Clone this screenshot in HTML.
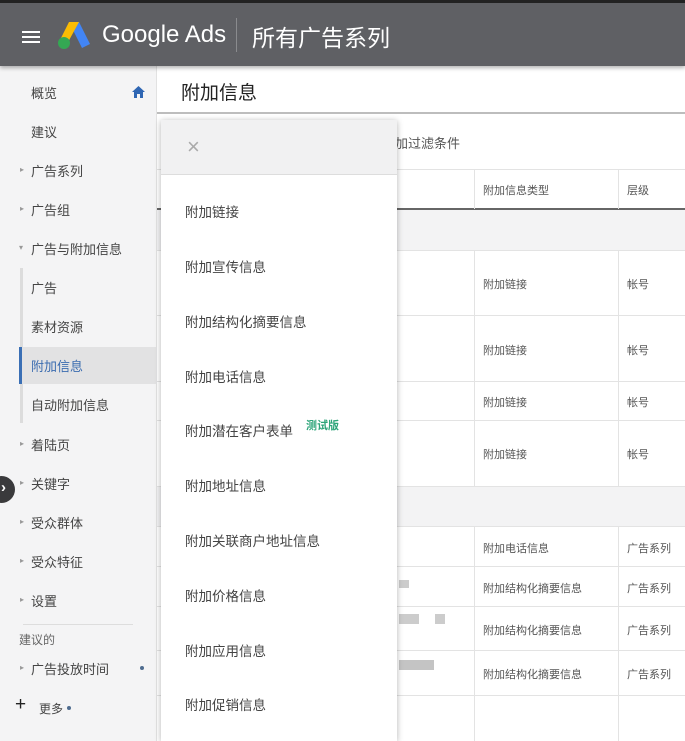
<!DOCTYPE html>
<html><head><meta charset="utf-8"><style>
*{margin:0;padding:0;box-sizing:border-box}
body{width:685px;height:741px;overflow:hidden;background:#fff;font-family:"Liberation Sans","Noto Sans CJK SC",sans-serif;position:relative;color:#333}
.a{position:absolute;white-space:nowrap}
.hdr{left:0;top:0;width:685px;height:66px;background:#5f6064;border-top:3px solid #222;box-shadow:0 2px 4px rgba(0,0,0,.3);z-index:5}
.side{left:0;top:66px;width:157px;height:675px;background:#f4f4f5;border-right:1px solid #e2e2e2}
.si{font-size:13px;color:#444}
.tri{font-size:8px;color:#999}
.t{font-size:11px;color:#555}
.hl{position:absolute;height:1px;background:#e3e3e3}
.vl{position:absolute;width:1px;background:#e3e3e3}
.pop{left:161px;top:120px;width:236px;height:621px;background:#fff;box-shadow:0 1px 6px rgba(0,0,0,.3);z-index:4}
.pi{left:24px;font-size:13.5px;color:#444}
</style></head><body>
<div class="a hdr">
 <div class="a" style="left:22px;top:28px;width:18px;height:2px;background:#fff;box-shadow:0 5px 0 #fff,0 10px 0 #fff"></div>
 <svg class="a" style="left:57px;top:17px" width="34" height="30" viewBox="0 0 34 30"><path d="M12 2 L22 2 L33 24 L25 28 Z" fill="#4285f4"/><path d="M12 2 L22 2 L10 24 L2 22 Z" fill="#fbbc04"/><circle cx="7" cy="23" r="6" fill="#34a853"/></svg>
 <div class="a" style="left:102px;top:18px;font-size:24px;color:#fff">Google Ads</div>
 <div class="a" style="left:236px;top:15px;width:1px;height:34px;background:#8a8b8e"></div>
 <div class="a" style="left:252px;top:16px;font-size:23px;color:#fff">所有广告系列</div>
</div>
<div class="a side"></div>
<div class="a si" style="left:31px;top:83px">概览</div>
<svg class="a" style="left:131px;top:85px" width="15" height="14" viewBox="0 0 15 14"><path d="M7.5 1 L14 7 H12 V13 H9 V9 H6 V13 H3 V7 H1 Z" fill="#2f66b3"/></svg>
<div class="a si" style="left:31px;top:122px">建议</div>
<div class="a tri" style="left:20px;top:165px">▸</div><div class="a si" style="left:31px;top:161px">广告系列</div>
<div class="a tri" style="left:20px;top:204px">▸</div><div class="a si" style="left:31px;top:200px">广告组</div>
<div class="a tri" style="left:19px;top:243px">▾</div><div class="a si" style="left:31px;top:239px">广告与附加信息</div>
<div class="a" style="left:20px;top:268px;width:3px;height:155px;background:#dcdcdc"></div>
<div class="a si" style="left:31px;top:278px">广告</div>
<div class="a si" style="left:31px;top:317px">素材资源</div>
<div class="a" style="left:19px;top:347px;width:138px;height:37px;background:#e2e2e3"></div>
<div class="a" style="left:19px;top:347px;width:3px;height:37px;background:#3a6fb5"></div>
<div class="a si" style="left:31px;top:356px;color:#3c6db0">附加信息</div>
<div class="a si" style="left:31px;top:395px">自动附加信息</div>
<div class="a tri" style="left:20px;top:439px">▸</div><div class="a si" style="left:31px;top:435px">着陆页</div>
<div class="a" style="left:-12px;top:476px;width:27px;height:27px;border-radius:50%;background:#3a3a3c;z-index:6"></div>
<div class="a" style="left:1px;top:479px;color:#fff;font-size:15px;font-weight:bold;z-index:7">›</div>
<div class="a tri" style="left:20px;top:478px">▸</div><div class="a si" style="left:31px;top:474px">关键字</div>
<div class="a tri" style="left:20px;top:517px">▸</div><div class="a si" style="left:31px;top:513px">受众群体</div>
<div class="a tri" style="left:20px;top:556px">▸</div><div class="a si" style="left:31px;top:552px">受众特征</div>
<div class="a tri" style="left:20px;top:595px">▸</div><div class="a si" style="left:31px;top:591px">设置</div>
<div class="a" style="left:23px;top:624px;width:110px;height:1px;background:#ddd"></div>
<div class="a" style="left:19px;top:631px;font-size:12px;color:#666">建议的</div>
<div class="a tri" style="left:20px;top:663px">▸</div><div class="a si" style="left:31px;top:659px">广告投放时间</div>
<div class="a" style="left:140px;top:666px;width:4px;height:4px;border-radius:50%;background:#4f6c8f"></div>
<div class="a" style="left:15px;top:694px;font-size:19px;color:#222">+</div>
<div class="a" style="left:39px;top:700px;font-size:12px;color:#444">更多</div>
<div class="a" style="left:67px;top:706px;width:4px;height:4px;border-radius:50%;background:#4f6c8f"></div>
<!-- main -->
<div class="a" style="left:181px;top:78px;font-size:19px;color:#222">附加信息</div>
<div class="a" style="left:157px;top:112px;width:528px;height:2px;background:#bdbdbd"></div>
<div class="a" style="left:395px;top:133px;font-size:13px;color:#555">加过滤条件</div>
<div class="hl" style="left:157px;top:169px;width:528px"></div>
<div class="a t" style="left:483px;top:182px">附加信息类型</div>
<div class="a t" style="left:627px;top:182px">层级</div>
<div class="a" style="left:157px;top:208px;width:528px;height:2px;background:#666"></div>
<div class="a" style="left:157px;top:210px;width:528px;height:40px;background:#f3f3f4"></div>
<div class="a" style="left:157px;top:486px;width:528px;height:40px;background:#f3f3f4"></div>
<div class="vl" style="left:474px;top:169px;height:40px"></div><div class="vl" style="left:618px;top:169px;height:40px"></div>
<div class="vl" style="left:474px;top:250px;height:236px"></div><div class="vl" style="left:618px;top:250px;height:236px"></div>
<div class="vl" style="left:474px;top:526px;height:215px"></div><div class="vl" style="left:618px;top:526px;height:215px"></div>
<div class="hl" style="left:157px;top:250px;width:528px"></div>
<div class="hl" style="left:157px;top:315px;width:528px"></div>
<div class="hl" style="left:157px;top:381px;width:528px"></div>
<div class="hl" style="left:157px;top:420px;width:528px"></div>
<div class="hl" style="left:157px;top:486px;width:528px"></div>
<div class="hl" style="left:157px;top:526px;width:528px"></div>
<div class="hl" style="left:157px;top:566px;width:528px"></div>
<div class="hl" style="left:157px;top:606px;width:528px"></div>
<div class="hl" style="left:157px;top:650px;width:528px"></div>
<div class="hl" style="left:157px;top:695px;width:528px"></div>
<div class="a t" style="left:483px;top:276px">附加链接</div><div class="a t" style="left:627px;top:276px">帐号</div>
<div class="a t" style="left:483px;top:342px">附加链接</div><div class="a t" style="left:627px;top:342px">帐号</div>
<div class="a t" style="left:483px;top:394px">附加链接</div><div class="a t" style="left:627px;top:394px">帐号</div>
<div class="a t" style="left:483px;top:446px">附加链接</div><div class="a t" style="left:627px;top:446px">帐号</div>
<div class="a t" style="left:483px;top:540px">附加电话信息</div><div class="a t" style="left:627px;top:540px">广告系列</div>
<div class="a t" style="left:483px;top:580px">附加结构化摘要信息</div><div class="a t" style="left:627px;top:580px">广告系列</div>
<div class="a t" style="left:483px;top:622px">附加结构化摘要信息</div><div class="a t" style="left:627px;top:622px">广告系列</div>
<div class="a t" style="left:483px;top:666px">附加结构化摘要信息</div><div class="a t" style="left:627px;top:666px">广告系列</div>
<div class="a" style="left:399px;top:580px;width:10px;height:8px;background:#ccc"></div>
<div class="a" style="left:399px;top:614px;width:20px;height:10px;background:#ccc"></div>
<div class="a" style="left:435px;top:614px;width:10px;height:10px;background:#ccc"></div>
<div class="a" style="left:399px;top:660px;width:35px;height:10px;background:#c4c4c4"></div>
<!-- popup -->
<div class="a pop">
 <div class="a" style="left:0;top:0;width:236px;height:55px;background:#f1f1f2;border-bottom:1px solid #ddd"></div>
 <div class="a" style="left:26px;top:14px;font-size:22px;color:#aaa">×</div>
 <div class="a pi" style="top:81px">附加链接</div>
 <div class="a pi" style="top:136px">附加宣传信息</div>
 <div class="a pi" style="top:191px">附加结构化摘要信息</div>
 <div class="a pi" style="top:246px">附加电话信息</div>
 <div class="a pi" style="top:300px">附加潜在客户表单</div>
 <div class="a" style="left:145px;top:297px;font-size:11px;font-weight:bold;color:#2ea57a">测试版</div>
 <div class="a pi" style="top:355px">附加地址信息</div>
 <div class="a pi" style="top:410px">附加关联商户地址信息</div>
 <div class="a pi" style="top:465px">附加价格信息</div>
 <div class="a pi" style="top:520px">附加应用信息</div>
 <div class="a pi" style="top:574px">附加促销信息</div>
</div>
</body></html>
